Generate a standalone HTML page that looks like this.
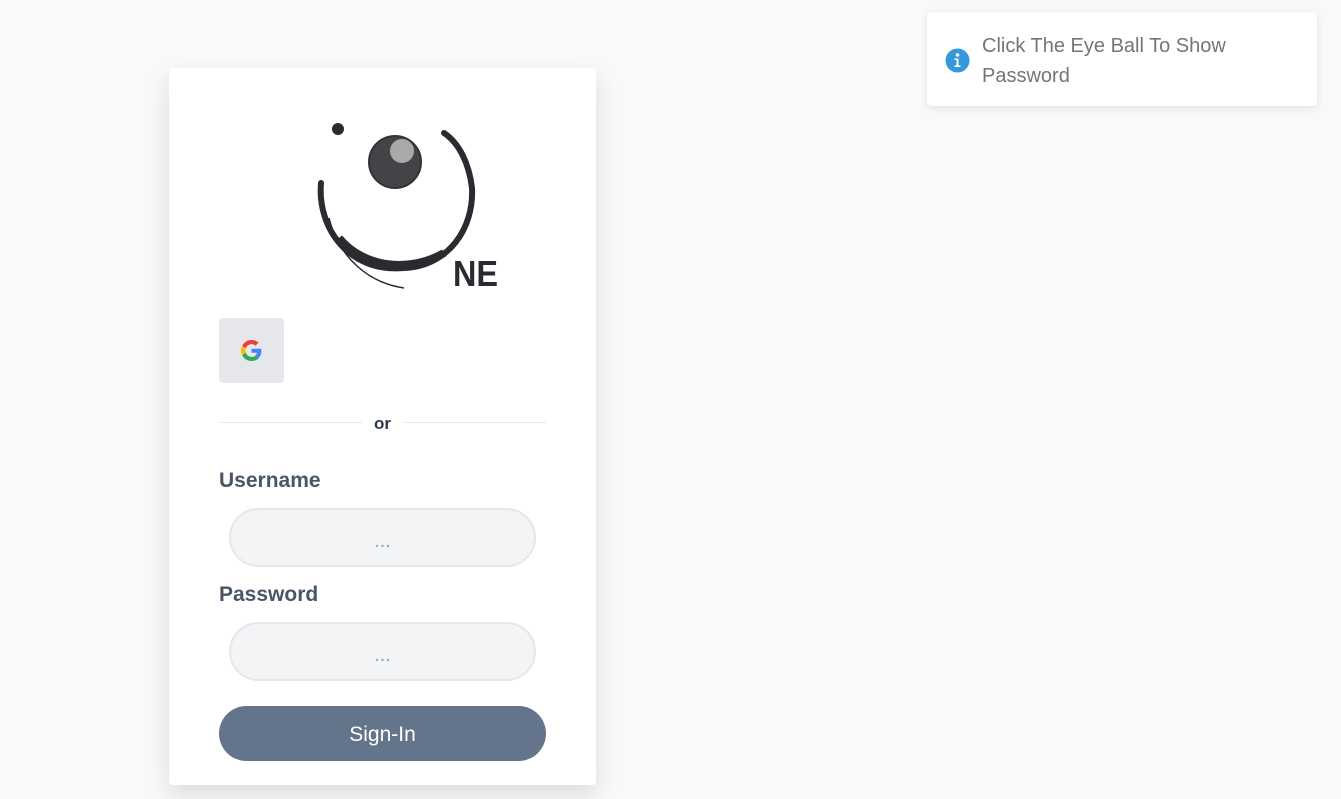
<!DOCTYPE html>
<html><head><style>
body{margin:0;width:1341px;height:799px;background:#f8f9fb;font-family:"Liberation Sans",sans-serif;position:relative;overflow:hidden}
.card{position:absolute;left:169px;top:68px;width:427px;height:717px;background:#fff;border-radius:3px;box-shadow:0 10px 25px rgba(0,0,0,.12)}
.abs{position:absolute}
.lbl{position:absolute;left:50px;font-size:21px;font-weight:bold;color:#4a5568}
.inp{position:absolute;left:60px;width:303px;height:55px;border:2px solid #e5e7eb;background:#f3f4f6;border-radius:30px;text-align:center;color:#9ca3af;font-size:20px;line-height:62px}
.toast{position:absolute;left:927px;top:12px;width:390px;height:94px;background:#fff;border-radius:4px;box-shadow:0 2px 8px rgba(0,0,0,.1)}
</style></head><body>
<div class="card">
<svg class="abs" style="left:0;top:0" width="427" height="230">
<circle cx="169" cy="61" r="6" fill="#2a2a30"/>
<path d="M152 115 C148 160 180 205 235 200 C280 198 305 160 303 120 C300 95 290 75 275 65" fill="none" stroke="#2a2a30" stroke-width="6" stroke-linecap="round"/>
<path d="M170 170 C195 200 240 205 275 185" fill="none" stroke="#2a2a30" stroke-width="8"/>
<path d="M160 150 C170 190 200 215 235 220" fill="none" stroke="#2a2a30" stroke-width="1.5"/>
<circle cx="226" cy="94" r="26" fill="#444348" stroke="#333" stroke-width="2"/>
<circle cx="233" cy="83" r="12" fill="#a9a9a9"/>
<text x="284" y="218" font-family="Liberation Sans" font-weight="bold" font-size="36" fill="#2a2a30" textLength="45" lengthAdjust="spacingAndGlyphs">NE</text>
</svg>
<div class="abs" style="left:50px;top:250px;width:65px;height:65px;background:#e5e7eb;border-radius:4px">
<svg class="abs" style="left:22px;top:22px" width="21" height="21" viewBox="0 0 48 48"><path fill="#EA4335" d="M24 9.5c3.5 0 6.6 1.2 9.1 3.6l6.8-6.8C35.8 2.4 30.3 0 24 0 14.6 0 6.6 5.4 2.7 13.3l7.9 6.1C12.5 13.6 17.8 9.5 24 9.5z"/><path fill="#4285F4" d="M46.5 24.5c0-1.6-.1-3.1-.4-4.5H24v9h12.7c-.6 2.9-2.2 5.4-4.7 7.1l7.6 5.9c4.4-4.1 6.9-10.1 6.9-17.5z"/><path fill="#FBBC05" d="M10.5 28.6c-.5-1.4-.8-3-.8-4.6s.3-3.2.8-4.6l-7.9-6.1C1 16.6 0 20.2 0 24s1 7.4 2.7 10.7l7.8-6.1z"/><path fill="#34A853" d="M24 48c6.5 0 11.9-2.1 15.9-5.8l-7.6-5.9c-2.1 1.4-4.9 2.3-8.3 2.3-6.2 0-11.5-4.2-13.4-9.9l-7.9 6.1C6.6 42.6 14.6 48 24 48z"/></svg>
</div>
<div class="abs" style="left:50px;top:354px;width:143px;height:1px;background:#e5e7eb"></div>
<div class="abs" style="left:234px;top:354px;width:143px;height:1px;background:#e5e7eb"></div>
<div class="abs" style="left:193px;top:346px;width:41px;text-align:center;font-weight:bold;font-size:17px;color:#2d3748">or</div>
<div class="lbl" style="top:401px">Username</div>
<div class="inp" style="top:440px">...</div>
<div class="lbl" style="top:515px">Password</div>
<div class="inp" style="top:554px">...</div>
<div class="abs" style="left:50px;top:638px;width:327px;height:55px;background:#64748b;border-radius:28px;color:#fff;font-size:21px;line-height:57px;text-align:center">Sign-In</div>
</div>
<div class="toast">
<svg class="abs" style="left:18px;top:36px" width="25" height="25" viewBox="0 0 25 25"><circle cx="12.5" cy="12.5" r="12" fill="#3498db"/><circle cx="12.5" cy="7" r="1.8" fill="#fff"/><path d="M9.5 10.5h4v7h2v1.5h-6v-1.5h2v-5.5h-2z" fill="#fff"/></svg>
<div class="abs" style="left:55px;top:19px;font-size:20px;line-height:30px;color:#757575">Click The Eye Ball To Show<br>Password</div>
</div>
</body></html>
